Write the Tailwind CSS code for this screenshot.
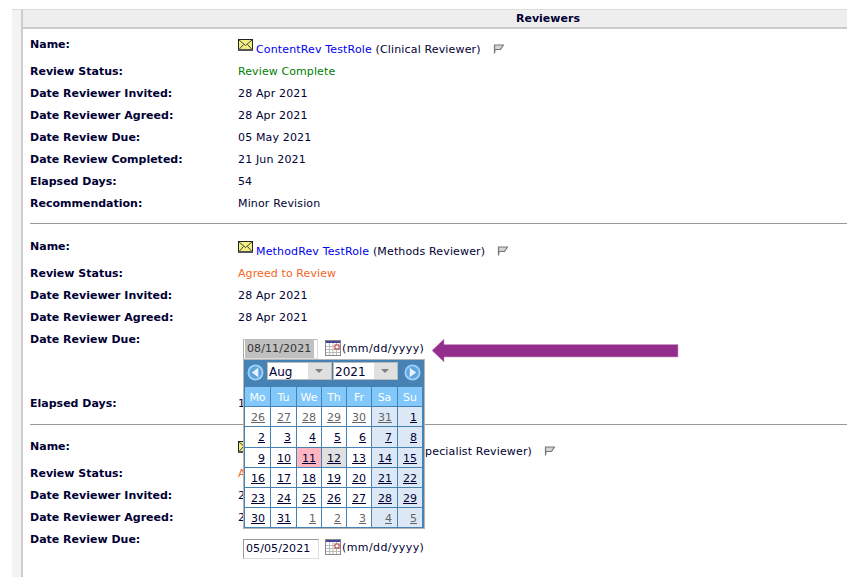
<!DOCTYPE html>
<html lang="en">
<head>
  <meta charset="UTF-8" />
  <title>Reviewers</title>
  <script src="https://cdn.jsdelivr.net/npm/@tailwindcss/browser@4"></script>
</head>
<body class="bg-white text-[11px] text-[#000033] font-['DejaVu_Sans',Verdana,sans-serif] overflow-hidden">
  <div class="relative h-[585px] w-[867px] overflow-hidden pt-[9px] pl-[12px]">
    <div class="flex h-[568px] w-[835px] border-t border-[#dddddd] bg-[#f3f3f3] pl-[9px]">
      <div class="w-[826px] border-l-2 border-[#cccccc] bg-white">

        <div class="h-[19px] border-b-2 border-[#cccccc] bg-[#eeeeee] pl-[493px] font-bold leading-[17px]">Reviewers</div>

        <div class="ml-[7px] pt-[4px]">
          <!-- reviewer 1 -->
          <div class="grid h-[28px] grid-cols-[208px_1fr]">
            <b class="pt-[4px]">Name:</b>
            <div class="flex items-start pt-[6px]">
              <svg width="15" height="12" viewBox="0 0 15 12" class="mr-[3px] shrink-0"><rect x="0.5" y="0.5" width="14" height="10" fill="#f4f080" stroke="#222"/><path d="M1 1l6.500 5.500L14 1M1 10.500l4.500-5M14 10.500l-4.500-5" fill="none" stroke="#444"/><rect y="10" width="15" height="2" fill="#555"/></svg>
              <span class="pt-[3px] tracking-[0.15px]"><span class="text-[#0000ee]">ContentRev TestRole</span> (Clinical Reviewer)</span>
              <svg width="11" height="10" viewBox="0 0 11 10" class="ml-[12px] mt-[5px]"><path d="M1.500 9.500V1h9L7.500 5.500H2z" fill="#d4d4d8" stroke="#777" stroke-width="1.200"/></svg>
            </div>
          </div>
          <div class="grid h-[22px] grid-cols-[208px_1fr] items-center"><b>Review Status:</b><span class="tracking-[0.1px] text-[#008000]">Review Complete</span></div>
          <div class="grid h-[22px] grid-cols-[208px_1fr] items-center"><b>Date Reviewer Invited:</b><span class="tracking-[0.15px]">28 Apr 2021</span></div>
          <div class="grid h-[22px] grid-cols-[208px_1fr] items-center"><b>Date Reviewer Agreed:</b><span class="tracking-[0.15px]">28 Apr 2021</span></div>
          <div class="grid h-[22px] grid-cols-[208px_1fr] items-center"><b>Date Review Due:</b><span class="tracking-[0.15px]">05 May 2021</span></div>
          <div class="grid h-[22px] grid-cols-[208px_1fr] items-center"><b>Date Review Completed:</b><span class="tracking-[0.15px]">21 Jun 2021</span></div>
          <div class="grid h-[22px] grid-cols-[208px_1fr] items-center"><b>Elapsed Days:</b><span>54</span></div>
          <div class="grid h-[22px] grid-cols-[208px_1fr] items-center"><b>Recommendation:</b><span class="tracking-[0.15px]">Minor Revision</span></div>
          <hr class="mt-[8px] mb-[11px] h-px border-0 bg-[#999999]" />

          <!-- reviewer 2 -->
          <div class="grid h-[28px] grid-cols-[208px_1fr]">
            <b class="pt-[4px]">Name:</b>
            <div class="flex items-start pt-[6px]">
              <svg width="15" height="12" viewBox="0 0 15 12" class="mr-[3px] shrink-0"><rect x="0.5" y="0.5" width="14" height="10" fill="#f4f080" stroke="#222"/><path d="M1 1l6.500 5.500L14 1M1 10.500l4.500-5M14 10.500l-4.500-5" fill="none" stroke="#444"/><rect y="10" width="15" height="2" fill="#555"/></svg>
              <span class="pt-[3px] tracking-[0.15px]"><span class="text-[#0000ee]">MethodRev TestRole</span> (Methods Reviewer)</span>
              <svg width="11" height="10" viewBox="0 0 11 10" class="ml-[12px] mt-[5px]"><path d="M1.500 9.500V1h9L7.500 5.500H2z" fill="#d4d4d8" stroke="#777" stroke-width="1.200"/></svg>
            </div>
          </div>
          <div class="grid h-[22px] grid-cols-[208px_1fr] items-center"><b>Review Status:</b><span class="tracking-[0.1px] text-[#f26522]">Agreed to Review</span></div>
          <div class="grid h-[22px] grid-cols-[208px_1fr] items-center"><b>Date Reviewer Invited:</b><span class="tracking-[0.15px]">28 Apr 2021</span></div>
          <div class="grid h-[22px] grid-cols-[208px_1fr] items-center"><b>Date Reviewer Agreed:</b><span class="tracking-[0.15px]">28 Apr 2021</span></div>
          <div class="grid h-[64px] grid-cols-[208px_1fr]">
            <b class="pt-[3px]">Date Review Due:</b>
            <div class="flex items-start pt-[10px] pl-[5px]">
              <div class="h-[20px] w-[75px] border border-[#dddddd] border-t-[#bbbbbb] border-l-[#aaaaaa] px-[1px] leading-[18px]"><span class="inline-block h-[18px] w-[69px] bg-[#c0c0c0] pl-[2px] tracking-[0.1px] text-[#333333]">08/11/2021</span></div>
              <svg width="16" height="16" viewBox="0 0 16 16" class="ml-[7px] mt-[1px] shrink-0"><rect x="0.500" y="0.500" width="15" height="15" fill="#fff" stroke="#888"/><rect x="1" y="1" width="14" height="2" fill="#44449a"/><path d="M1 6.500h14M1 9.500h14M1 12.500h14M4.500 3v12M8 3v12M11.500 3v12" stroke="#bbb"/><rect x="10" y="5" width="4" height="4" fill="#fff" stroke="#b03030"/></svg>
              <span class="ml-[1px] pt-[2px] tracking-[0.4px]">(mm/dd/yyyy)</span>
            </div>
          </div>
          <div class="grid h-[22px] grid-cols-[208px_1fr] items-center"><b>Elapsed Days:</b><span>1</span></div>
          <hr class="mt-[9px] mb-[10px] h-px border-0 bg-[#999999]" />

          <!-- reviewer 3 -->
          <div class="grid h-[28px] grid-cols-[208px_1fr]">
            <b class="pt-[4px]">Name:</b>
            <div class="flex items-start pt-[6px]">
              <svg width="15" height="12" viewBox="0 0 15 12" class="mr-[3px] shrink-0"><rect x="0.5" y="0.5" width="14" height="10" fill="#f4f080" stroke="#222"/><path d="M1 1l6.500 5.500L14 1M1 10.500l4.500-5M14 10.500l-4.500-5" fill="none" stroke="#444"/><rect y="10" width="15" height="2" fill="#555"/></svg>
              <span class="pt-[3px] tracking-[0.15px]"><span class="text-[#0000ee]">ExpertRev TestRole</span> (Subject Specialist Reviewer)</span>
              <svg width="11" height="10" viewBox="0 0 11 10" class="ml-[12px] mt-[5px]"><path d="M1.500 9.500V1h9L7.500 5.500H2z" fill="#d4d4d8" stroke="#777" stroke-width="1.200"/></svg>
            </div>
          </div>
          <div class="grid h-[22px] grid-cols-[208px_1fr] items-center"><b>Review Status:</b><span class="tracking-[0.1px] text-[#f26522]">Agreed to Review</span></div>
          <div class="grid h-[22px] grid-cols-[208px_1fr] items-center"><b>Date Reviewer Invited:</b><span class="tracking-[0.15px]">28 Apr 2021</span></div>
          <div class="grid h-[22px] grid-cols-[208px_1fr] items-center"><b>Date Reviewer Agreed:</b><span class="tracking-[0.15px]">28 Apr 2021</span></div>
          <div class="grid h-[30px] grid-cols-[208px_1fr]">
            <b class="pt-[3px]">Date Review Due:</b>
            <div class="flex items-start pt-[10px] pl-[5px]">
              <div class="h-[20px] w-[76px] border border-[#dddddd] border-t-[#999999] border-l-[#999999] px-[2px] leading-[18px] tracking-[0.1px]">05/05/2021</div>
              <svg width="16" height="16" viewBox="0 0 16 16" class="ml-[6px] shrink-0"><rect x="0.500" y="0.500" width="15" height="15" fill="#fff" stroke="#888"/><rect x="1" y="1" width="14" height="2" fill="#44449a"/><path d="M1 6.500h14M1 9.500h14M1 12.500h14M4.500 3v12M8 3v12M11.500 3v12" stroke="#bbb"/><rect x="10" y="5" width="4" height="4" fill="#fff" stroke="#b03030"/></svg>
              <span class="ml-[1px] pt-[1px] tracking-[0.4px]">(mm/dd/yyyy)</span>
            </div>
          </div>
        </div>
      </div>
    </div>

    <!-- pointer arrow -->
    <svg width="250" height="26" viewBox="0 0 250 26" class="absolute left-[431px] top-[338px]"><path d="M1 12.500L13 1v5.500h234v12.500H13v5z" fill="#952d8d" stroke="#c99ac6" stroke-width="0.600"/></svg>

    <!-- date picker popup -->
    <div class="absolute left-[243px] top-[359px] w-[182px] border border-[#b5b5b5] bg-[#4682b4]">
      <div class="flex h-[27px] items-start pt-[2px]">
        <svg width="17" height="17" viewBox="0 0 18 18" class="ml-[3px] mt-[2px] shrink-0"><circle cx="9" cy="9" r="8.500" fill="#9fd0f5"/><circle cx="9" cy="9" r="6.500" fill="#5da3dc"/><path d="M12 4v10L5 9z" fill="#e4f3ff"/></svg>
        <div class="ml-[3px] flex h-[18px] w-[65px] border border-[#bbbbbb] bg-white"><span class="w-[41px] pl-[1px] text-[12px] leading-[18px]">Aug</span><span class="flex w-[24px] items-center justify-center bg-[#e0e0e0]"><i class="h-0 w-0 border-x-[4px] border-t-[4px] border-x-transparent border-t-[#808080]"></i></span></div>
        <div class="ml-[1px] flex h-[18px] w-[65px] border border-[#bbbbbb] bg-white"><span class="w-[41px] pl-[1px] text-[12px] leading-[18px]">2021</span><span class="flex w-[24px] items-center justify-center bg-[#e0e0e0]"><i class="h-0 w-0 border-x-[4px] border-t-[4px] border-x-transparent border-t-[#808080]"></i></span></div>
        <svg width="17" height="17" viewBox="0 0 18 18" class="ml-[6px] mt-[2px] shrink-0"><circle cx="9" cy="9" r="8.500" fill="#9fd0f5"/><circle cx="9" cy="9" r="6.500" fill="#5da3dc"/><path d="M6 4v10l7-5z" fill="#e4f3ff"/></svg>
      </div>
      <div class="grid grid-cols-[25px_25px_24px_24px_24px_25px_24px] grid-rows-[19px_19px_20px_19px_19px_19px_19px] gap-px px-[1px] pb-[1px] leading-[21px]">
        <span class="bg-[#82c8fa] text-center text-white">Mo</span><span class="bg-[#82c8fa] text-center text-white">Tu</span><span class="bg-[#82c8fa] text-center text-white">We</span><span class="bg-[#82c8fa] text-center text-white">Th</span><span class="bg-[#82c8fa] text-center text-white">Fr</span><span class="bg-[#82c8fa] text-center text-white">Sa</span><span class="bg-[#82c8fa] text-center text-white">Su</span>

        <a class="bg-white pr-[5px] text-right text-[#666666] underline">26</a><a class="bg-white pr-[5px] text-right text-[#666666] underline">27</a><a class="bg-white pr-[5px] text-right text-[#666666] underline">28</a><a class="bg-white pr-[5px] text-right text-[#666666] underline">29</a><a class="bg-white pr-[5px] text-right text-[#666666] underline">30</a><a class="bg-[#dce8f5] pr-[5px] text-right text-[#666666] underline">31</a><a class="bg-[#dce8f5] pr-[5px] text-right underline">1</a>

        <a class="bg-white pr-[5px] text-right underline">2</a><a class="bg-white pr-[5px] text-right underline">3</a><a class="bg-white pr-[5px] text-right underline">4</a><a class="bg-white pr-[5px] text-right underline">5</a><a class="bg-white pr-[5px] text-right underline">6</a><a class="bg-[#dce8f5] pr-[5px] text-right underline">7</a><a class="bg-[#dce8f5] pr-[5px] text-right underline">8</a>

        <a class="bg-white pr-[5px] text-right underline">9</a><a class="bg-white pr-[5px] text-right underline">10</a><a class="bg-[#ffb6c1] pr-[5px] text-right underline">11</a><a class="bg-[#e0e0e0] pr-[5px] text-right underline">12</a><a class="bg-white pr-[5px] text-right underline">13</a><a class="bg-[#dce8f5] pr-[5px] text-right underline">14</a><a class="bg-[#dce8f5] pr-[5px] text-right underline">15</a>

        <a class="bg-white pr-[5px] text-right underline">16</a><a class="bg-white pr-[5px] text-right underline">17</a><a class="bg-white pr-[5px] text-right underline">18</a><a class="bg-white pr-[5px] text-right underline">19</a><a class="bg-white pr-[5px] text-right underline">20</a><a class="bg-[#dce8f5] pr-[5px] text-right underline">21</a><a class="bg-[#dce8f5] pr-[5px] text-right underline">22</a>

        <a class="bg-white pr-[5px] text-right underline">23</a><a class="bg-white pr-[5px] text-right underline">24</a><a class="bg-white pr-[5px] text-right underline">25</a><a class="bg-white pr-[5px] text-right underline">26</a><a class="bg-white pr-[5px] text-right underline">27</a><a class="bg-[#dce8f5] pr-[5px] text-right underline">28</a><a class="bg-[#dce8f5] pr-[5px] text-right underline">29</a>

        <a class="bg-white pr-[5px] text-right underline">30</a><a class="bg-white pr-[5px] text-right underline">31</a><a class="bg-white pr-[5px] text-right text-[#666666] underline">1</a><a class="bg-white pr-[5px] text-right text-[#666666] underline">2</a><a class="bg-white pr-[5px] text-right text-[#666666] underline">3</a><a class="bg-[#dce8f5] pr-[5px] text-right text-[#666666] underline">4</a><a class="bg-[#dce8f5] pr-[5px] text-right text-[#666666] underline">5</a>
      </div>
    </div>
  </div>
</body>
</html>
